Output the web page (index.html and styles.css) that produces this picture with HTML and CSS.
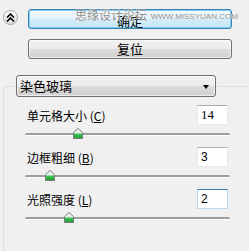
FILE: index.html
```html
<!DOCTYPE html>
<html lang="zh-cn">
<head>
    <meta charset="UTF-8">
    <meta name="viewport" content="width=device-width, initial-scale=1.0">
    <title>染色玻璃</title>
    <link rel="stylesheet" href="styles.css">
</head>
<body>
    <div class="top">
        <button class="collapse">
            <svg width="9" height="9" viewBox="0 0 9 9">
                <path d="M1 4.5 4.5 1 8 4.5M1 8.5 4.5 5 8 8.5" fill="none" stroke="#000" stroke-width="1.6"/>
            </svg>
        </button>
        <div class="actions">
            <button class="btn btn-default">确定</button>
            <button class="btn">复位</button>
        </div>
        <div class="watermark">思缘设计论坛 <span>WWW.MISSYUAN.COM</span></div>
    </div>

    <div class="group">
        <div class="combo">染色玻璃<i class="arrow"></i></div>

        <div class="fields">
            <div class="field">
                <div class="field-head">
                    <label>单元格大小 (<u>C</u>)</label>
                    <input class="num serif" value="14">
                </div>
                <div class="slider">
                    <div class="track"></div>
                    <svg class="thumb" style="left: 48px" width="10" height="11" viewBox="0 0 10 11">
                        <defs>
                            <linearGradient id="g1" x1="0" y1="0" x2="0" y2="1">
                                <stop offset="0" stop-color="#f6f6f6"/>
                                <stop offset=".45" stop-color="#e8f3ea"/>
                                <stop offset=".55" stop-color="#3cc452"/>
                                <stop offset="1" stop-color="#1f9c33"/>
                            </linearGradient>
                        </defs>
                        <path d="M5 .5 9.5 4.5V10.5H.5V4.5Z" fill="url(#g1)" stroke="#7a7a7a"/>
                    </svg>
                </div>
            </div>

            <div class="field">
                <div class="field-head">
                    <label>边框粗细 (<u>B</u>)</label>
                    <input class="num" value="3">
                </div>
                <div class="slider">
                    <div class="track"></div>
                    <svg class="thumb" style="left: 20px" width="10" height="11" viewBox="0 0 10 11">
                        <defs>
                            <linearGradient id="g2" x1="0" y1="0" x2="0" y2="1">
                                <stop offset="0" stop-color="#f6f6f6"/>
                                <stop offset=".45" stop-color="#e8f3ea"/>
                                <stop offset=".55" stop-color="#3cc452"/>
                                <stop offset="1" stop-color="#1f9c33"/>
                            </linearGradient>
                        </defs>
                        <path d="M5 .5 9.5 4.5V10.5H.5V4.5Z" fill="url(#g2)" stroke="#7a7a7a"/>
                    </svg>
                </div>
            </div>

            <div class="field">
                <div class="field-head">
                    <label>光照强度 (<u>L</u>)</label>
                    <input class="num focus" value="2">
                </div>
                <div class="slider">
                    <div class="track"></div>
                    <svg class="thumb" style="left: 39px" width="10" height="11" viewBox="0 0 10 11">
                        <defs>
                            <linearGradient id="g3" x1="0" y1="0" x2="0" y2="1">
                                <stop offset="0" stop-color="#f6f6f6"/>
                                <stop offset=".45" stop-color="#e8f3ea"/>
                                <stop offset=".55" stop-color="#3cc452"/>
                                <stop offset="1" stop-color="#1f9c33"/>
                            </linearGradient>
                        </defs>
                        <path d="M5 .5 9.5 4.5V10.5H.5V4.5Z" fill="url(#g3)" stroke="#7a7a7a"/>
                    </svg>
                </div>
            </div>
        </div>
    </div>
</body>
</html>
```

FILE: styles.css
```css
body {
    margin: 0;
    height: 251px;
    overflow: hidden;
    background-color: #f0f0f0;
    font-family: "Noto Sans CJK SC", "Liberation Sans", sans-serif;
    font-size: 12px;
    color: #000;
}
.top {
    position: relative;
    display: flex;
    padding-top: 9px;
}
.collapse {
    width: 15px;
    height: 15px;
    margin: 1px 0 0 3px;
    padding: 0;
    border: 1px solid #a5a5a5;
    border-radius: 50%;
    background: linear-gradient(#ffffff, #dcdcdc);
    display: flex;
    align-items: center;
    justify-content: center;
}
.actions {
    display: flex;
    flex-direction: column;
    gap: 10px;
    width: 204px;
    margin-left: 10px;
}
.btn {
    height: 20px;
    margin: 0;
    padding: 0;
    box-sizing: border-box;
    border: 1px solid #707070;
    border-radius: 3px;
    background: linear-gradient(#f2f2f2, #ebebeb 50%, #dddddd 50%, #cfcfcf);
    box-shadow: inset 0 0 0 1px rgba(255, 255, 255, 0.6);
    font-family: inherit;
    font-size: 13px;
    line-height: 18px;
    color: #000;
}
.btn-default {
    border-color: #3c7fb1;
    background: linear-gradient(#f2f9fd, #e3f3fb 50%, #d3ecf8 50%, #c6e5f6);
    box-shadow: inset 0 0 0 1px #78d0f3;
    padding-top: 2px;
}
.watermark {
    position: absolute;
    top: 8px;
    left: 75px;
    font-size: 12px;
    line-height: 14px;
    color: #8a8a8a;
    text-shadow: 0 0 2px #fff, 0 0 1px #fff;
    white-space: nowrap;
}
.watermark span {
    font-family: "Liberation Sans", sans-serif;
    font-size: 8px;
    margin-left: 1px;
    vertical-align: 1px;
}
.group {
    height: 164px;
    margin: 27px 0 0 3px;
    border: 1px solid #d5dfe5;
    border-right: 0;
    border-bottom: 0;
    border-top-left-radius: 4px;
}
.combo {
    position: relative;
    width: 200px;
    height: 22px;
    margin: -12px 0 0 12px;
    padding-left: 3px;
    box-sizing: border-box;
    border: 1px solid #707070;
    border-radius: 3px;
    background: linear-gradient(#f2f2f2, #ebebeb 50%, #dddddd 50%, #cfcfcf);
    box-shadow: inset 0 0 0 1px rgba(255, 255, 255, 0.6), 0 0 0 2px #f0f0f0;
    font-size: 13px;
    line-height: 20px;
}
.arrow {
    position: absolute;
    right: 6px;
    top: 9px;
    border-left: 3.5px solid transparent;
    border-right: 3.5px solid transparent;
    border-top: 4px solid #000;
}
.fields {
    width: 205px;
    padding: 8px 0 0 21px;
}
.field-head {
    display: flex;
    justify-content: space-between;
    align-items: center;
    height: 20px;
}
.field-head label {
    margin-left: 2px;
}
.num {
    width: 31px;
    height: 20px;
    margin: 0 2px 0 0;
    padding: 0 3px;
    box-sizing: border-box;
    border: 1px solid #e3e9ef;
    border-top-color: #abadb3;
    background: #fff;
    font-family: "Liberation Sans", sans-serif;
    font-size: 12px;
    outline: none;
}
.num.serif {
    font-family: "Liberation Serif", serif;
    font-size: 13px;
}
.num.focus {
    border-color: #b7d9ed;
    border-top-color: #3d7bad;
}
.slider {
    position: relative;
    height: 22px;
}
.track {
    position: relative;
    top: 8px;
    height: 2px;
    background-color: #9d9d9d;
    border-bottom: 1px solid #fff;
    border-radius: 2px;
}
.thumb {
    position: absolute;
    top: 3px;
}
```
